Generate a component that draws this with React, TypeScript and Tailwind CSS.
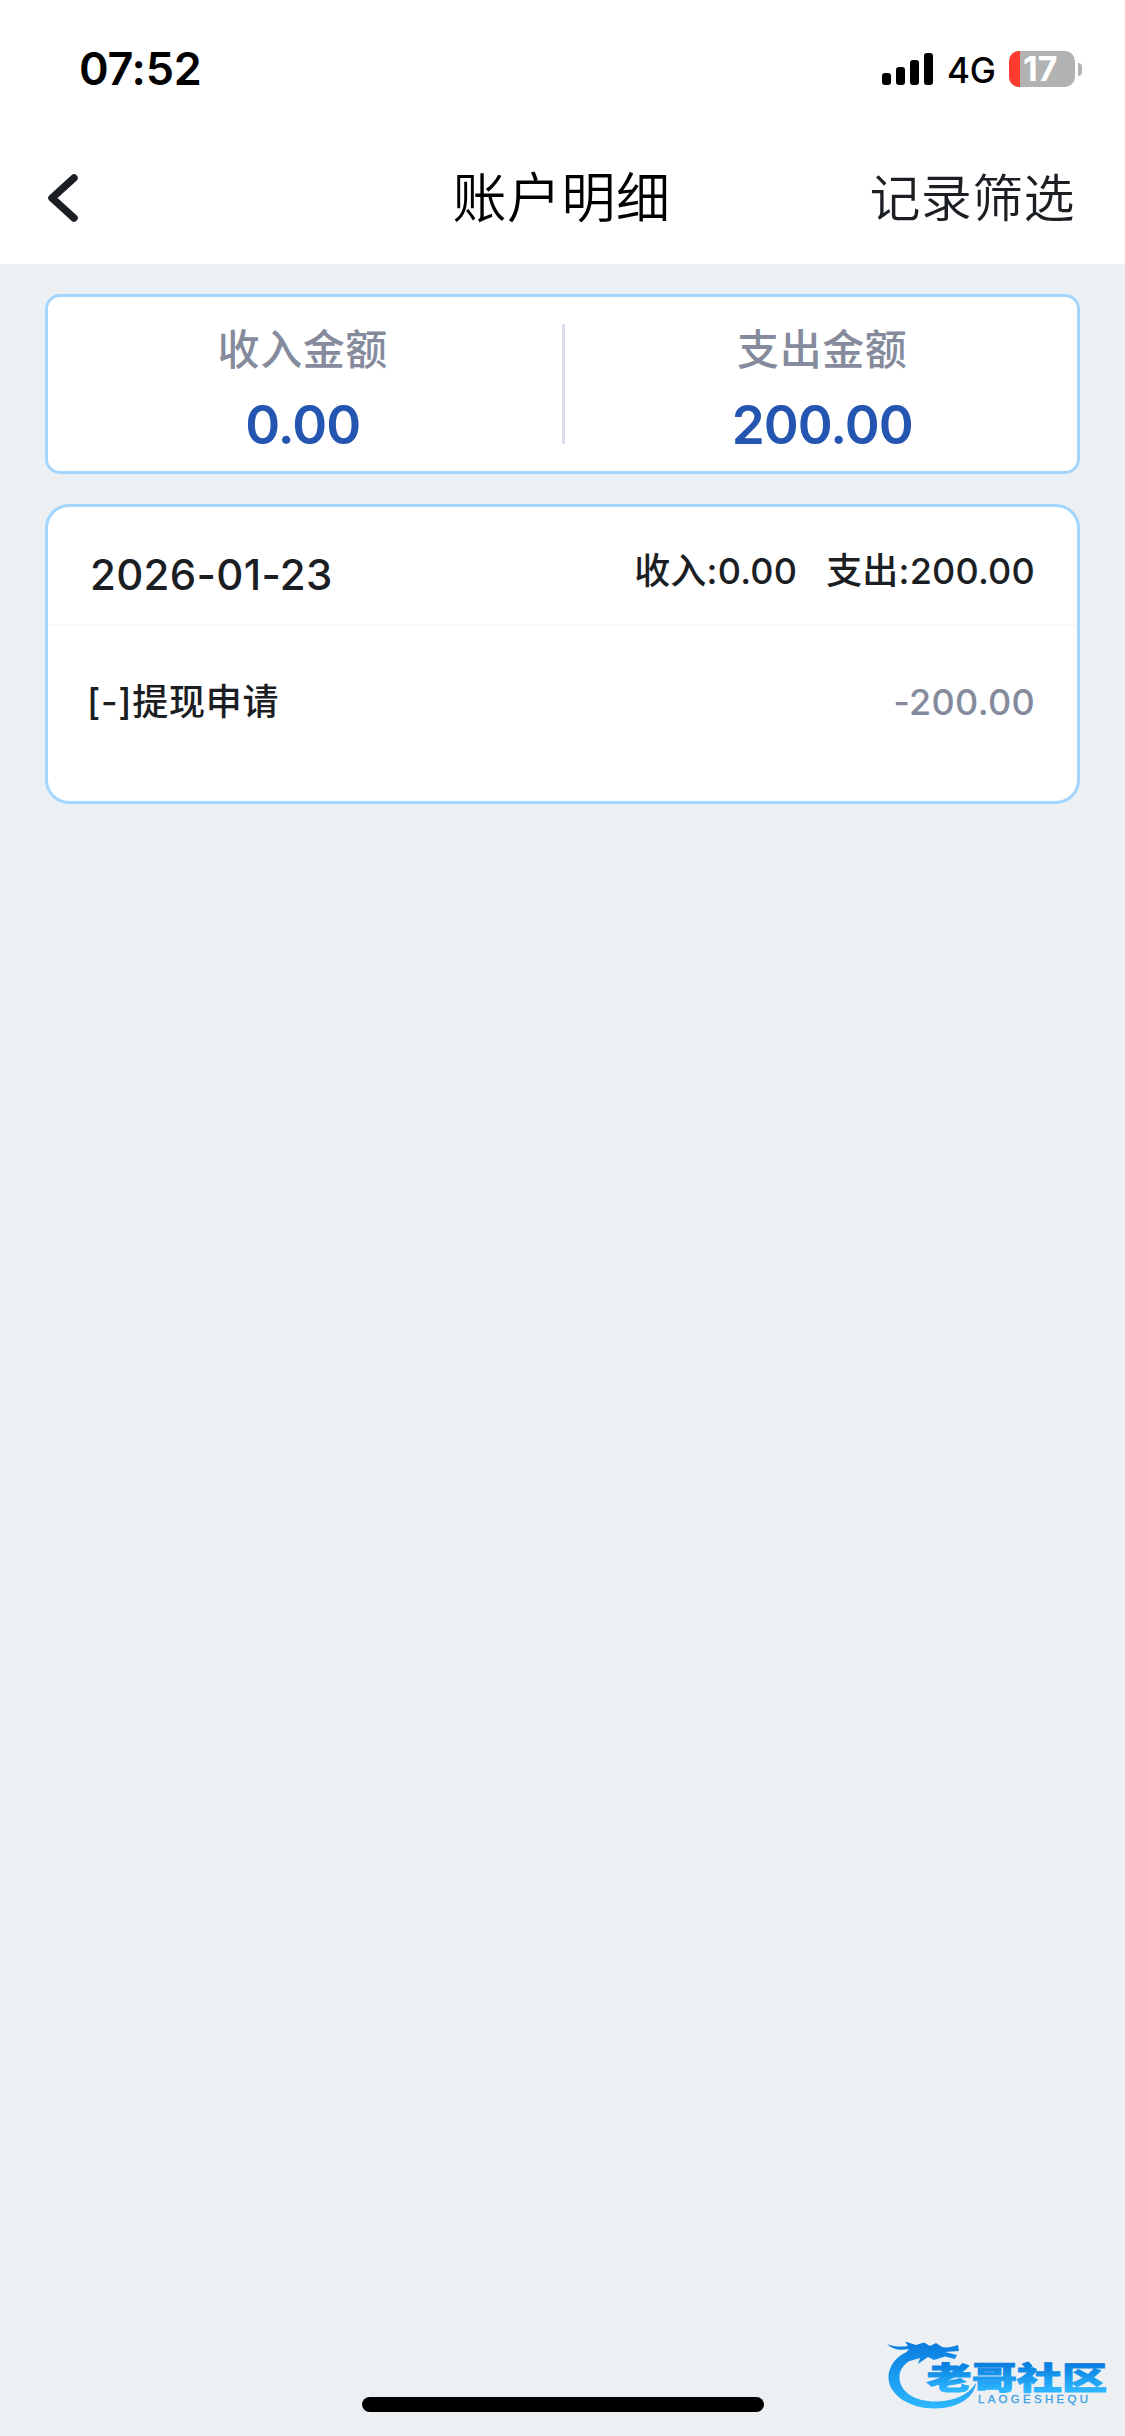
interface AmountProps {
  label: string
  value: string
}

const records = [{ title: "提现申请", amount: "-200.00" }]

function StatusBar() {
  return (
    <div className="flex h-[132px] items-start justify-between pl-[79px] pr-[43px]">
      <span className="mt-[41px] text-[45px] font-semibold leading-[56px] tracking-[-0.3px] text-black">07:52</span>
      <div className="mt-[49px] flex h-[40px] items-center">
        <svg className="h-[32px] w-[51px]" viewBox="0 0 51 32">
          <rect x="0" y="20" width="9" height="12" rx="3" />
          <rect x="14" y="14" width="9" height="18" rx="3" />
          <rect x="28" y="7" width="9" height="25" rx="3" />
          <rect x="42" y="0" width="9" height="32" rx="3" />
        </svg>
        <span className="ml-[14px] mt-[2px] w-[48px] text-[35px] font-[450] leading-[40px] tracking-[-0.3px] text-black">4G</span>
        <div className="ml-[14px] flex h-[36px] w-[66px] items-center rounded-[10px] bg-[#b2b2b2]">
          <div className="h-full w-[11px] rounded-l-[10px] bg-[#ff3b30]" />
          <span className="ml-[3px] text-[34px] font-bold leading-[36px] text-white">17</span>
        </div>
        <div className="ml-[3px] h-[13px] w-[4px] rounded-r-full bg-[#b2b2b2]" />
      </div>
    </div>
  )
}

function NavBar() {
  return (
    <div className="grid h-[132px] grid-cols-3 items-center pl-[48px] pr-[50px]">
      <svg className="h-[48px] w-[30px]" viewBox="0 0 30 48" fill="none" stroke="#1b1e23" strokeWidth="7.5" strokeLinecap="round" strokeLinejoin="round">
        <path d="M26 4L4 24L26 44" />
      </svg>
      <h1 className="whitespace-nowrap pb-[6px] text-center font-['Noto_Sans_CJK_SC',sans-serif] text-[54px] font-[350] leading-[64px] tracking-[0.5px] text-black">账户明细</h1>
      <span className="whitespace-nowrap pb-[6px] text-right font-['Noto_Sans_CJK_SC',sans-serif] text-[51px] font-[350] leading-[64px] tracking-[0.4px] text-[#1b1e23]">记录筛选</span>
    </div>
  )
}

function Amount({ label, value }: AmountProps) {
  return (
    <div className="flex flex-1 flex-col items-center pt-[23px]">
      <span className="text-[42px] font-medium leading-[60px] tracking-[0.6px] text-[#858b9c]">{label}</span>
      <span className="mt-[12px] text-[53px] font-semibold leading-[66px] tracking-[-1px] text-[#2455b0]">{value}</span>
    </div>
  )
}

function Watermark() {
  return (
    <svg className="absolute bottom-[20px] right-[10px] h-[80px] w-[230px]" viewBox="0 0 230 80">
      <defs>
        <linearGradient id="ring" x1="0" y1="5" x2="0" y2="73" gradientUnits="userSpaceOnUse">
          <stop offset="0" stopColor="#087ade" />
          <stop offset="1" stopColor="#2fb8ff" />
        </linearGradient>
        <linearGradient id="name" x1="0" y1="0" x2="0" y2="1">
          <stop offset="0.2" stopColor="#0478dc" />
          <stop offset="0.85" stopColor="#2db6ff" />
        </linearGradient>
      </defs>
      <g fill="url(#ring)">
        <path d="M30 13C12 18 3.5 29 3.5 42C4 59 24 72.500 50 72.500C73 72 89 62 91 47C83 59 70 65 52 65.500C32 66 15 57 14.500 42C14 33 20 25 34 21Z" />
        <path d="M2 8C9 11 16 11 23 10L20 5.500L31 9L39 6.500L45 10L51 7L57 11C62 12 67 11 73 9L74 15L60 16L72 19L70 23L60 20.500L49 24L43 21L33 28L35 22L25 25L29 19L20 18L24 13C14 15 7 13 2 8Z" />
      </g>
      <text transform="translate(41.500 52.500) scale(1.31 0.9)" fontSize="34.500" fontWeight="900" fill="url(#name)" stroke="url(#name)" strokeWidth="1" fontFamily="Noto Sans CJK SC, sans-serif">老哥社区</text>
      <text x="93" y="67" textLength="110" fontSize="11.500" fill="#3a9fe6" stroke="#3a9fe6" strokeWidth="0.3" fontFamily="Liberation Sans, sans-serif">LAOGESHEQU</text>
    </svg>
  )
}

export default function App() {
  return (
    <div className="relative flex h-[2436px] w-[1125px] flex-col bg-[#ecf0f3] font-['Inter','Noto_Sans_CJK_SC',sans-serif]">
      <header className="bg-white">
        <StatusBar />
        <NavBar />
      </header>
      <main className="flex flex-1 flex-col gap-[30px] px-[45px] pt-[30px]">
        <section className="flex h-[180px] rounded-[15px] border-[3px] border-[#a3d6ff] bg-white">
          <div className="flex flex-1 pr-[4px]">
            <Amount label="收入金额" value="0.00" />
          </div>
          <div className="mt-[27px] h-[120px] w-[3px] bg-[#d9dcea]" />
          <div className="flex flex-1 pl-[3px]">
            <Amount label="支出金额" value="200.00" />
          </div>
        </section>
        <section className="h-[300px] rounded-[24px] border-[3px] border-[#a3d6ff] bg-white">
          <div className="flex h-[119px] items-start justify-between border-b-2 border-[#f8f8f8] pl-[42px] pr-[42px] text-[#1b1e23]">
            <span className="mt-[42px] text-[42px] font-medium leading-[52px] tracking-[0.3px]">2026-01-23</span>
            <div className="mt-[38px] flex gap-[29px] text-[36px] font-medium leading-[52px] tracking-[0.2px]">
              <span>收入:0.00</span>
              <span>支出:200.00</span>
            </div>
          </div>
          {records.map((record) => (
            <div key={record.title} className="flex justify-between pl-[39px] pr-[42px] pt-[50px] text-[36px] leading-[52px]">
              <span className="font-medium tracking-[0.7px] text-[#1b1e23]">[-]{record.title}</span>
              <span className="font-[450] tracking-[0.3px] text-[#858b9c]">{record.amount}</span>
            </div>
          ))}
        </section>
      </main>
      <div className="mb-[24px] h-[15px] w-[402px] self-center rounded-full bg-black" />
      <Watermark />
    </div>
  )
}
